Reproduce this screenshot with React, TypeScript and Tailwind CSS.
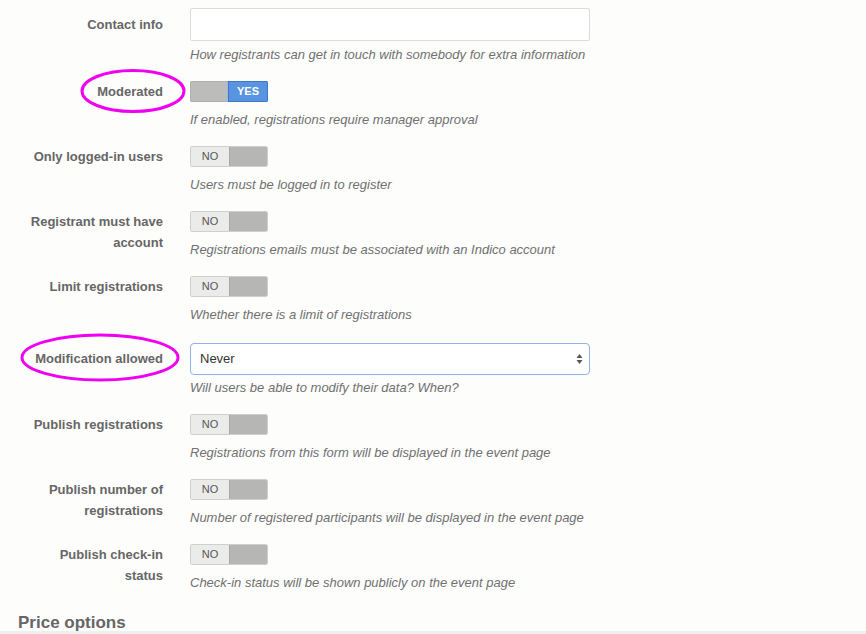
import React from 'react'

const font = { fontFamily: '"Liberation Sans", Arial, sans-serif' }

type Row = {
  label: string
  help: string
  kind: 'input' | 'toggle' | 'select'
  on?: boolean
}

const ROWS: Row[] = [
  { label: 'Contact info', help: 'How registrants can get in touch with somebody for extra information', kind: 'input' },
  { label: 'Moderated', help: 'If enabled, registrations require manager approval', kind: 'toggle', on: true },
  { label: 'Only logged-in users', help: 'Users must be logged in to register', kind: 'toggle' },
  { label: 'Registrant must have account', help: 'Registrations emails must be associated with an Indico account', kind: 'toggle' },
  { label: 'Limit registrations', help: 'Whether there is a limit of registrations', kind: 'toggle' },
  { label: 'Modification allowed', help: 'Will users be able to modify their data? When?', kind: 'select' },
  { label: 'Publish registrations', help: 'Registrations from this form will be displayed in the event page', kind: 'toggle' },
  { label: 'Publish number of registrations', help: 'Number of registered participants will be displayed in the event page', kind: 'toggle' },
  { label: 'Publish check-in status', help: 'Check-in status will be shown publicly on the event page', kind: 'toggle' },
]

function Toggle({ on }: { on?: boolean }) {
  if (on) {
    return (
      <div className="flex h-[21px] w-[78px] rounded-[2px] overflow-hidden">
        <div className="w-[38px] bg-[#bcbdbb] border border-[#aeb0ad]" />
        <div className="flex-1 bg-[#5894e0] border border-[#3f78c8] text-white text-[11px] font-bold flex items-center justify-center shadow-[0_0_4px_#9ec4f0]">
          YES
        </div>
      </div>
    )
  }
  return (
    <div className="flex h-[21px] w-[78px] rounded-[2px] overflow-hidden border border-[#cfd0ce]">
      <div className="w-[38px] bg-[#ebecea] text-[#555] text-[11px] flex items-center justify-center">NO</div>
      <div className="flex-1 bg-[#b6b7b5] border-l border-[#a8a9a7]" />
    </div>
  )
}

function Control({ row }: { row: Row }) {
  if (row.kind === 'input') {
    return <div className="h-[33px] w-[400px] border border-[#dcdddb] rounded-[2px] bg-white" />
  }
  if (row.kind === 'select') {
    return (
      <div className="h-[32px] w-[400px] border border-[#8fb3e6] rounded-[4px] bg-white flex items-center justify-between pl-[9px] pr-[6px] text-[13px] text-[#333]">
        <span>Never</span>
        <svg width="7" height="12" viewBox="0 0 7 12">
          <path d="M3.5 1 L6.5 5 L0.5 5 Z" fill="#555" />
          <path d="M3.5 11 L6.5 7 L0.5 7 Z" fill="#555" />
        </svg>
      </div>
    )
  }
  return <Toggle on={row.on} />
}

export default function App() {
  return (
    <div style={font} className="relative w-[866px] h-[634px] bg-[#fdfdfc] overflow-hidden">
      <div className="pt-[8px] flex flex-col gap-[17px]">
        {ROWS.map((row, i) => (
          <div key={row.label} className={`flex gap-[27px] ${row.kind === 'select' ? 'mt-[2px]' : ''}`}>
            <div
              className={`w-[163px] text-right text-[13px] font-bold leading-[21px] text-[#666] ${
                row.kind === 'input' ? 'pt-[6px]' : row.kind === 'select' ? 'pt-[5px]' : ''
              } ${i === 3 || i === 7 || i === 8 ? 'pl-[25px]' : ''}`}
            >
              {row.label}
            </div>
            <div className="flex flex-col">
              <Control row={row} />
              <div
                className={`${
                  row.kind === 'toggle' ? 'mt-[9px]' : row.kind === 'input' ? 'mt-[5px]' : 'mt-[4px]'
                } text-[13px] italic leading-[18px] text-[#707070]`}
              >
                {row.help}
              </div>
            </div>
          </div>
        ))}
      </div>
      <div className="pl-[18px] mt-[18px] text-[17px] font-bold text-[#666]">Price options</div>
      <div className="absolute left-0 right-0 bottom-0 h-[3px] bg-[#efefef]" />

      {/* highlight ellipses */}
      <svg className="absolute left-0 top-0 pointer-events-none" width="866" height="634">
        <ellipse cx="133" cy="91" rx="51" ry="20.5" fill="none" stroke="#f000f0" strokeWidth="3" />
        <ellipse cx="100" cy="357.5" rx="78" ry="22.5" fill="none" stroke="#f000f0" strokeWidth="3" />
      </svg>
    </div>
  )
}
